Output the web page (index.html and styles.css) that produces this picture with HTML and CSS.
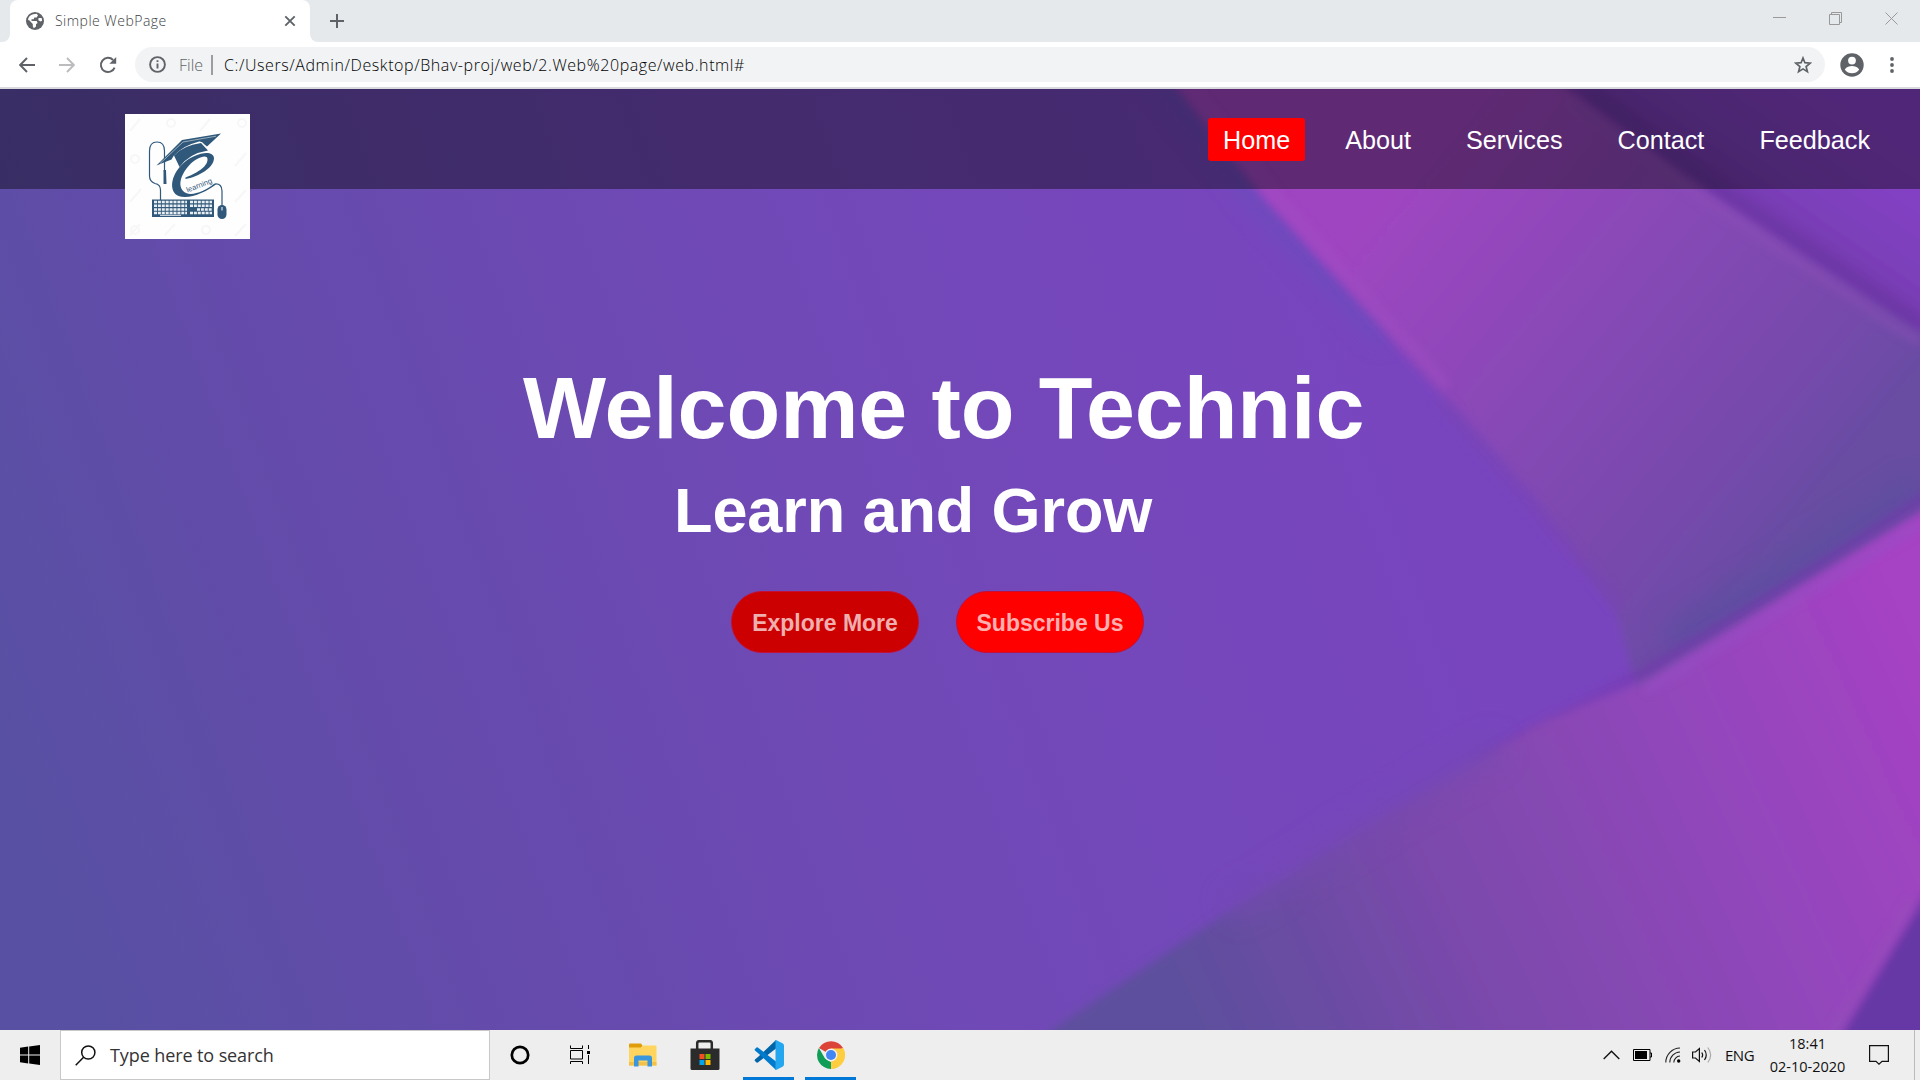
FILE: index.html
```html
<!DOCTYPE html>
<html lang="en">
<head>
<meta charset="utf-8">
<title>Simple WebPage</title>
<link rel="stylesheet" href="styles.css">
</head>
<body>
<div class="screen">
  <div class="tabstrip">
    <svg class="corner corner-left" width="8" height="8" viewBox="0 0 8 8"><path d="M8 0A8 8 0 0 1 0 8H8Z" fill="#fff"/></svg>
    <div class="tab">
      <svg width="18" height="18" viewBox="0 0 18 18"><circle cx="9" cy="9" r="9" fill="#5f6368"/><path d="M7.2 2.2 10.6 1.8 12 3.2 10.6 5.4H8.3L7.7 7.2H5.5V9H10.7L11.6 10.9 10 12.3V14.6L7.8 16.3 6.8 14.3V12L3.2 8.2 2 8.1C2.2 5 4.2 2.8 7.2 2.2ZM12.6 6.1H15.6L16.2 8.5 14.7 9.6 12.3 8.2Z" fill="#fff"/></svg>
      <span class="tab-title">Simple WebPage</span>
      <svg width="12" height="12" viewBox="0 0 12 12"><path d="M1.3 1.3 10.7 10.7M10.7 1.3 1.3 10.7" stroke="#5f6368" stroke-width="1.9"/></svg>
    </div>
    <svg class="corner" width="8" height="8" viewBox="0 0 8 8"><path d="M0 0A8 8 0 0 0 8 8H0Z" fill="#fff"/></svg>
    <svg class="newtab" width="16" height="16" viewBox="0 0 16 16"><path d="M8 1V15M1 8H15" stroke="#5f6368" stroke-width="2"/></svg>
    <div class="window-buttons">
      <svg width="13" height="13" viewBox="0 0 13 13"><path d="M0 5.5H13" stroke="#999"/></svg>
      <svg width="13" height="13" viewBox="0 0 13 13"><path d="M.5 2.5H10.5V12.5H.5ZM2.5 2.5V.5H12.5V10.5H10.5" fill="none" stroke="#999"/></svg>
      <svg width="13" height="13" viewBox="0 0 13 13"><path d="M.5.5 12.5 12.5M12.5.5.5 12.5" stroke="#999"/></svg>
    </div>
  </div>

  <div class="toolbar">
    <svg class="nav-icon" width="16" height="16" viewBox="0 0 16 16"><path d="M16 8H1.4M8 1 1.2 8 8 15" fill="none" stroke="#5f6368" stroke-width="1.9"/></svg>
    <svg class="nav-icon" width="16" height="16" viewBox="0 0 16 16"><path d="M0 8H14.6M8 1 14.8 8 8 15" fill="none" stroke="#babcbe" stroke-width="1.9"/></svg>
    <svg class="nav-icon" width="18" height="18" viewBox="0 0 18 18"><path d="M15.6 11.6A7.1 7.1 0 1 1 14.1 4" fill="none" stroke="#5f6368" stroke-width="2"/><path d="M17.2 1V7.8H10.4Z" fill="#5f6368"/></svg>
    <div class="omnibox">
      <svg width="17" height="17" viewBox="0 0 17 17"><circle cx="8.5" cy="8.5" r="7.4" fill="none" stroke="#5f6368" stroke-width="1.9"/><path d="M8.5 7.6V12.6M8.5 4.2V6" stroke="#5f6368" stroke-width="1.9"/></svg>
      <span class="scheme">File</span>
      <span class="divider"></span>
      <span class="url">C:/Users/Admin/Desktop/Bhav-proj/web/2.Web%20page/web.html#</span>
      <svg class="star" width="18" height="18" viewBox="0 0 18 18"><path d="M9 2 10.9 6.7 16.2 7.1 12.1 10.5 13.4 15.7 9 12.9 4.6 15.7 5.9 10.5 1.8 7.1 7.1 6.7Z" fill="none" stroke="#5f6368" stroke-width="1.7"/></svg>
    </div>
    <svg class="avatar" width="24" height="24" viewBox="0 0 24 24"><circle cx="12" cy="12" r="11.7" fill="#5f6368"/><circle cx="12" cy="7.6" r="3.9" fill="#fff"/><path d="M4.8 16.5C6.5 13.6 9.4 13 12 13S17.5 13.6 19.2 16.5C17.5 19.2 14.8 20.3 12 20.3S6.5 19.2 4.8 16.5Z" fill="#fff"/></svg>
    <svg class="menu" width="4" height="18" viewBox="0 0 4 18"><g fill="#5f6368"><circle cx="2" cy="3" r="1.9"/><circle cx="2" cy="9" r="1.9"/><circle cx="2" cy="15" r="1.9"/></g></svg>
  </div>

  <main class="page">
    <svg class="backdrop" viewBox="0 89 1920 941" preserveAspectRatio="none">
      <defs>
        <linearGradient id="base" gradientUnits="userSpaceOnUse" x1="40" y1="860" x2="1420" y2="360">
          <stop offset="0" stop-color="#5850a3"/><stop offset=".25" stop-color="#644bab"/><stop offset=".6" stop-color="#7149b7"/><stop offset="1" stop-color="#7945bf"/>
        </linearGradient>
        <linearGradient id="band" gradientUnits="userSpaceOnUse" x1="1330" y1="250" x2="1750" y2="600">
          <stop offset="0" stop-color="#a045c1"/><stop offset=".45" stop-color="#8748b6"/><stop offset=".8" stop-color="#764aac"/><stop offset="1" stop-color="#674da2"/>
        </linearGradient>
        <linearGradient id="corner" gradientUnits="userSpaceOnUse" x1="1760" y1="240" x2="1850" y2="110">
          <stop offset="0" stop-color="#6f36a4"/><stop offset=".35" stop-color="#7c3fba"/><stop offset="1" stop-color="#8642c8"/>
        </linearGradient>
        <linearGradient id="fold" gradientUnits="userSpaceOnUse" x1="1910" y1="620" x2="1170" y2="960">
          <stop offset="0" stop-color="#a642c4"/><stop offset=".3" stop-color="#9246bb"/><stop offset=".65" stop-color="#7c49ac"/><stop offset="1" stop-color="#5d4f9d"/>
        </linearGradient>
        <filter id="soft" x="-10%" y="-10%" width="120%" height="120%"><feGaussianBlur stdDeviation="5"/></filter>
        <filter id="shade" x="-20%" y="-20%" width="140%" height="140%"><feGaussianBlur stdDeviation="12"/></filter>
      </defs>
      <rect y="89" width="1920" height="941" fill="url(#base)"/>
      <path d="M1155 60 1265 200 1390 335" fill="none" stroke="#6550bd" stroke-width="28" opacity=".6" filter="url(#shade)"/>
      <g filter="url(#soft)">
        <path d="M1155 60 1265 200 1437 390 1530 495 1615 610 1646 720 1960 560V40Z" fill="url(#band)"/>
        <path d="M1530 60 1566 88 1713 195 1920 332 1960 350V40Z" fill="url(#corner)"/>
      </g>
      <path d="M1920 485 1790 572 1670 640" fill="none" stroke="#594fa0" stroke-width="34" opacity=".55" filter="url(#shade)"/>
      <path d="M1570 102 1713 205 1920 342" fill="none" stroke="#8d4fb8" stroke-width="9" opacity=".5" filter="url(#soft)"/>
      <path d="M1590 92 1720 188 1920 322" fill="none" stroke="#6634a0" stroke-width="11" opacity=".55" filter="url(#soft)"/>
      <path d="M1170 62 1275 196 1447 386" fill="none" stroke="#a14fc4" stroke-width="8" opacity=".6" filter="url(#soft)"/>
      <path d="M1440 400 1620 606" fill="none" stroke="#7844b4" stroke-width="12" opacity=".6" filter="url(#soft)"/>
      <path d="M1960 475 1785 588 1646 672 1480 762" fill="none" stroke="#7536ad" stroke-width="12" opacity=".5" filter="url(#soft)"/>
      <g filter="url(#soft)">
        <path d="M1960 486 1920 512 1646 680 1540 722 1389 812 1229 911 1052 1030 1000 1080H1960Z" fill="url(#fold)"/>
        <path d="M1960 840 1920 903 1842 1034 1820 1080H1960Z" fill="#6638a6"/>
      </g>
      <path d="M1500 745 1389 812 1229 911" fill="none" stroke="#7548b2" stroke-width="30" opacity=".55" filter="url(#shade)"/>
      <path d="M1920 525 1646 690" fill="none" stroke="#9750c4" stroke-width="8" opacity=".7" filter="url(#soft)"/>
      <path d="M1912 900 1832 1034" fill="none" stroke="#9551b8" stroke-width="8" opacity=".5" filter="url(#soft)"/>
    </svg>

    <div class="content">
      <header class="site-header">
        <svg class="logo" width="125" height="125" viewBox="0 0 125 125">
          <rect width="125" height="125" fill="#fefefe"/>
          <g stroke="#f7f7f7" stroke-width="2" fill="none"><path d="M5 17 15 5M75 17 85 5M110 52 121 39M5 88 16 75M5 121 15 110M110 88 121 76M110 122 121 110M40 121 50 110"/><circle cx="46" cy="9" r="4"/><circle cx="117" cy="9" r="4"/><circle cx="10" cy="45" r="4"/><circle cx="10" cy="116" r="4"/><circle cx="81" cy="116" r="4"/></g>
          <g fill="none" stroke="#2f587a" stroke-width="1.2">
            <path d="M35.500 87V76Q35.500 70.500 30 69.500Q24.500 67.500 24.500 62V37Q24.500 28 32 28Q39.500 28 39.500 37V58"/>
            <path d="M90 70Q97 69.500 97 77V92"/>
          </g>
          <path d="M38.500 56H41L41.500 70H38.500Z" fill="#2f587a"/>
          <path d="M31.500 51.500 57 26 96 19.500 82 32.500 79.500 30.500Q77 27 74 27.500Q57 32 48.500 42L46.500 45.500Z" fill="#2f587a"/>
          <path d="M49 41.500Q58 31.500 76 29L83 36.500Q64 39.500 54.500 53Z" fill="#2f587a"/>
          <path d="M35 49.500 58 28 91 22.200" fill="none" stroke="#c5d1db" stroke-width=".7"/>
          <path d="M60.500 65C73 63 89 54 89 44C88 35 69 39 57.500 50C45 62 44 78 53.500 82C64 86 81 78 91 70.500L89.500 69.500C80 77 68 82 61 79C51 74 56 60 64 51.500C71 44 82 39.500 82.500 45C83 53 70 60 60.500 63.500Z" fill="#2f587a"/>
          <text class="logo-text" transform="translate(62.5 78.500) rotate(-21)">learning</text>
          <rect x="27" y="85.500" width="62" height="17.500" fill="#2f587a"/>
          <g stroke="#e9eef2" stroke-width="2.500" fill="none" stroke-dasharray="3 .9"><path d="M29 88H62M65 88H87M29 91.700H62M65 91.700H87M29 95.400H62M72 95.400H87M29 99H62M65 99H87"/></g>
          <path d="M35 101.300H56" stroke="#e9eef2"/>
          <rect x="92.500" y="91" width="9" height="14" rx="4.500" fill="#2f587a"/><path d="M97 93V96.500" stroke="#fff"/>
        </svg>
        <nav class="menu-bar">
          <a class="menu-item active">Home</a>
          <a class="menu-item">About</a>
          <a class="menu-item">Services</a>
          <a class="menu-item">Contact</a>
          <a class="menu-item">Feedback</a>
        </nav>
      </header>
      <section class="hero">
        <h1 class="hero-title">Welcome to Technic</h1>
        <h2 class="hero-subtitle">Learn and Grow</h2>
        <div class="hero-actions">
          <button class="pill pill-dark">Explore More</button>
          <button class="pill">Subscribe Us</button>
        </div>
      </section>
    </div>
  </main>

  <footer class="taskbar">
    <div class="start"><svg width="20" height="20" viewBox="0 0 20 20"><path d="M0 2.700 8.200 1.500V9.500H0ZM9.200 1.400 20 0V9.500H9.200ZM0 10.500H8.200V18.500L0 17.300ZM9.200 10.500H20V20L9.200 18.600Z"/></svg></div>
    <div class="search">
      <svg width="21" height="21" viewBox="0 0 21 21"><circle cx="13.300" cy="7.500" r="6.600" fill="none" stroke="#111" stroke-width="1.500"/><path d="M8.600 12.200.7 20.300" stroke="#111" stroke-width="1.500"/></svg>
      <span class="search-text">Type here to search</span>
    </div>
    <div class="apps">
      <div class="app"><svg width="20" height="20" viewBox="0 0 20 20"><circle cx="10" cy="10" r="8.200" fill="none" stroke="#000" stroke-width="2.700"/></svg></div>
      <div class="app app-narrow"><svg width="20" height="20" viewBox="0 0 20 20"><path d="M.5.500V3.500H12.500V.5M.5 19V16.500H12.500V19M.5 5.500H12.500V14H.5ZM18.500 0V4M18.500 10V19" fill="none" stroke="#000"/><path d="M17 6H20V9H17Z"/></svg></div>
      <div class="app app-folder"><svg width="28" height="24" viewBox="0 0 28 24"><path d="M0 1.500Q0 .5 1 .5H12L13.500 2.500 12 5H0Z" fill="#e09d0b"/><path d="M0 4.500H12L14 2.500H26.500Q27.500 2.500 27.500 3.500V22.500H0Z" fill="#ffd55f"/><path d="M0 19H27.500V22.500H0Z" fill="#f3c04a"/><path d="M5 23.500V15Q5 12.500 7.500 12.500H20.500Q23 12.500 23 15V23.500H18.500V17.500H9.500V23.500Z" fill="#3a96dd"/></svg></div>
      <div class="app"><svg width="30" height="30" viewBox="0 0 30 30"><path d="M7.200 10V3.500Q7.200 1.200 9.500 1.200H19.500Q21.800 1.200 21.800 3.500V10" fill="none" stroke="#2b2b2b" stroke-width="2.500"/><path d="M.5 8.500H29.500V28.500Q29.500 30 28 30H2Q.5 30 .5 28.500Z" fill="#2b2b2b"/><path d="M9.500 14H14.500V19H9.500Z" fill="#f25022"/><path d="M15.500 14H20.500V19H15.500Z" fill="#7fba00"/><path d="M9.500 20H14.500V25H9.500Z" fill="#00a4ef"/><path d="M15.500 20H20.500V25H15.500Z" fill="#ffb900"/></svg></div>
      <div class="app running"><svg width="30" height="30" viewBox="0 0 30 30"><path d="M22 0 4.500 16.500 1.500 19Q0 20.500 1 21L2.500 22.500Q3.500 23 4.500 22L22 8.500Z" fill="#0065a9"/><path d="M22 30 4.500 13.500 1.500 11Q0 9.500 1 9L2.500 7.500Q3.500 7 4.500 8L22 21.500Z" fill="#007acc"/><path d="M22 0 28.500 3.200Q30 4 30 5.500V24.500Q30 26 28.500 26.800L22 30Q20.500 29.500 21.500 28V2Q20.500.5 22 0Z" fill="#25a7f0"/></svg></div>
      <div class="app running"><svg width="28" height="28" viewBox="0 0 28 28"><path d="M14 14 2 7A14 14 0 0 1 26.100 7Z" fill="#db4437"/><path d="M14 14 26.100 7A14 14 0 0 1 14 28L14 21Z" fill="#ffcd40"/><path d="M14 21 14 28A14 14 0 0 1 1.900 7L8 17.500Z" fill="#0f9d58"/><path d="M14 7.600H26.400A14 14 0 0 1 14 28L20 17.500Z" fill="#ffcd40"/><circle cx="14" cy="14" r="6.400" fill="#f1f1f1"/><circle cx="14" cy="14" r="5" fill="#4285f4"/></svg></div>
    </div>
    <div class="tray">
      <svg width="17" height="10" viewBox="0 0 17 10"><path d="M.7 9 8.500 1.200 16.300 9" fill="none" stroke="#111" stroke-width="1.400"/></svg>
      <svg class="battery" width="19" height="12" viewBox="0 0 19 12"><path d="M.5.500H17V11.500H.5ZM17 4H18.500V8H17" fill="none" stroke="#000"/><path d="M2 2H14V10H2Z"/></svg>
      <svg class="wifi" width="16" height="16" viewBox="0 0 16 16"><path d="M.8 15.500A14.500 14.500 0 0 1 15 1M4.800 15.500A10.500 10.500 0 0 1 15 5M8.800 15.500A6.500 6.500 0 0 1 15 9" fill="none" stroke="#222" stroke-width="1.100"/><circle cx="13.700" cy="14" r="1.700"/></svg>
      <svg class="volume" width="20" height="18" viewBox="0 0 20 18"><path d="M.6 6H3.500L7.400 2.500V15.500L3.500 12H.6Z" fill="none" stroke="#111" stroke-width="1.200"/><path d="M9.800 6.500Q11.500 9 9.800 11.500M12.500 4Q16 9 12.500 14" fill="none" stroke="#111" stroke-width="1.200"/><path d="M15.800 1.500Q21.500 9 15.800 16.500" fill="none" stroke="#aaa" stroke-width="1.200"/></svg>
      <span class="language">ENG</span>
      <div class="clock"><span class="time">18:41</span><span class="date">02-10-2020</span></div>
      <svg class="notice" width="20" height="20" viewBox="0 0 20 20"><path d="M.6.600H19.400V16.400H13L10 19.200 7 16.400H.6Z" fill="none" stroke="#111" stroke-width="1.200"/></svg>
      <span class="peek"></span>
    </div>
  </footer>
</div>
</body>
</html>
```
FILE: styles.css
```css
* { box-sizing: border-box; }
body { margin: 0; }
svg { display: block; flex: none; }
span { white-space: nowrap; }

.screen {
  width: 1920px;
  height: 1080px;
  overflow: hidden;
  display: grid;
  grid-template-rows: 42px 47px 941px 50px;
  font-family: "Open Sans", "Noto Sans", sans-serif;
}

/* Browser tabs */
.tabstrip { display: flex; align-items: flex-end; background: #e5e9ec; padding-left: 2px; }
.tab {
  width: 300px;
  height: 42px;
  padding: 0 14px 0 16px;
  border-radius: 8px 8px 0 0;
  background: #fff;
  display: flex;
  align-items: center;
}
.tab-title { flex: 1; margin: 0 0 1px 11px; font-size: 14px; font-weight: 300; color: #3c4043; letter-spacing: .48px; }
.newtab { margin: 0 0 13px 11px; }
.window-buttons { flex: 1; display: flex; justify-content: flex-end; gap: 43px; padding: 0 22px 17px 0; }

/* Address bar */
.toolbar { display: flex; align-items: center; background: #fff; border-bottom: 2px solid #d9dadd; padding-left: 19px; }
.nav-icon { margin-right: 24px; }
.nav-icon + .nav-icon + .nav-icon { margin-right: 18px; }
.omnibox {
  width: 1690px;
  height: 35px;
  border-radius: 18px;
  background: #f1f3f4;
  display: flex;
  align-items: center;
  padding: 0 13px 0 14px;
}
.scheme { margin-left: 13px; width: 32px; font-size: 16px; font-weight: 300; color: #5f6368; }
.divider { width: 2px; height: 20px; background: #9a9da1; margin-right: 11px; }
.url { flex: 1; font-size: 16px; font-weight: 300; color: #000; letter-spacing: .58px; }
.avatar { margin-left: 15px; }
.menu { margin-left: 26px; }

/* Site */
.page { display: grid; overflow: hidden; }
.page > * { grid-area: 1 / 1; }
.backdrop { width: 1920px; height: 941px; }
.content { font-family: "Liberation Sans", Arial, sans-serif; color: #fff; }
.site-header {
  height: 100px;
  background: rgba(0, 0, 0, .4);
  display: flex;
  align-items: flex-start;
  justify-content: space-between;
  padding: 25px 35px 0 125px;
}
.logo-text { font: 7.600px "Liberation Sans", Arial, sans-serif; fill: #2f587a; }
.menu-bar { display: flex; gap: 25px; padding-top: 4px; }
.menu-item { height: 43px; line-height: 45px; padding: 0 15px; border-radius: 3px; font-size: 25.200px; }
.active { background: #f00; }
.hero { padding-top: 169px; }
.hero-title { margin: 0 0 0 523px; font-size: 88px; line-height: 100px; letter-spacing: -.08px; white-space: nowrap; }
.hero-subtitle { margin: 16px 0 0 674px; font-size: 63px; line-height: 72px; letter-spacing: -.1px; white-space: nowrap; }
.hero-actions { display: flex; gap: 37px; margin: 45px 0 0 731px; }
.pill {
  width: 188px;
  height: 62px;
  padding: 2px 0 0;
  border: 1px solid #c2103a;
  border-radius: 31px;
  background: #f00;
  color: rgba(255, 255, 255, .7);
  font: bold 23px "Liberation Sans", Arial, sans-serif;
}
.pill-dark { background: #c00; }

/* Taskbar */
.taskbar { display: flex; background: #eee; color: #111; }
.start { width: 60px; display: grid; place-items: center; }
.search { width: 430px; border: 1px solid #c8c8c8; background: #fff; display: flex; align-items: center; padding-left: 14px; }
.search-text { margin-left: 14px; font-size: 18px; color: #333; letter-spacing: -.1px; }
.apps { display: flex; }
.app { width: 60px; display: grid; place-items: center; }
.app-folder { width: 66px; }
.app-folder + .app { width: 58px; }
.running, .app-folder + .running { border-bottom: 3px solid #0078d7; width: 51px; padding-top: 3px; }
.app + .running { margin-left: 9px; }
.running + .running { margin-left: 11px; }
.tray { flex: 1; display: flex; align-items: center; justify-content: flex-end; font-size: 15px; }
.battery { margin-left: 13px; }
.wifi { margin-left: 13px; }
.volume { margin-left: 11px; }
.language { margin-left: 13px; width: 28px; letter-spacing: -.5px; }
.clock { margin-left: 16px; width: 77px; display: grid; justify-items: center; line-height: 23px; padding-bottom: 1px; font-size: 14.500px; }
.notice { margin-left: 23px; }
.peek { width: 6px; height: 50px; margin-left: 25px; border-left: 1px solid #bbb; }
```
